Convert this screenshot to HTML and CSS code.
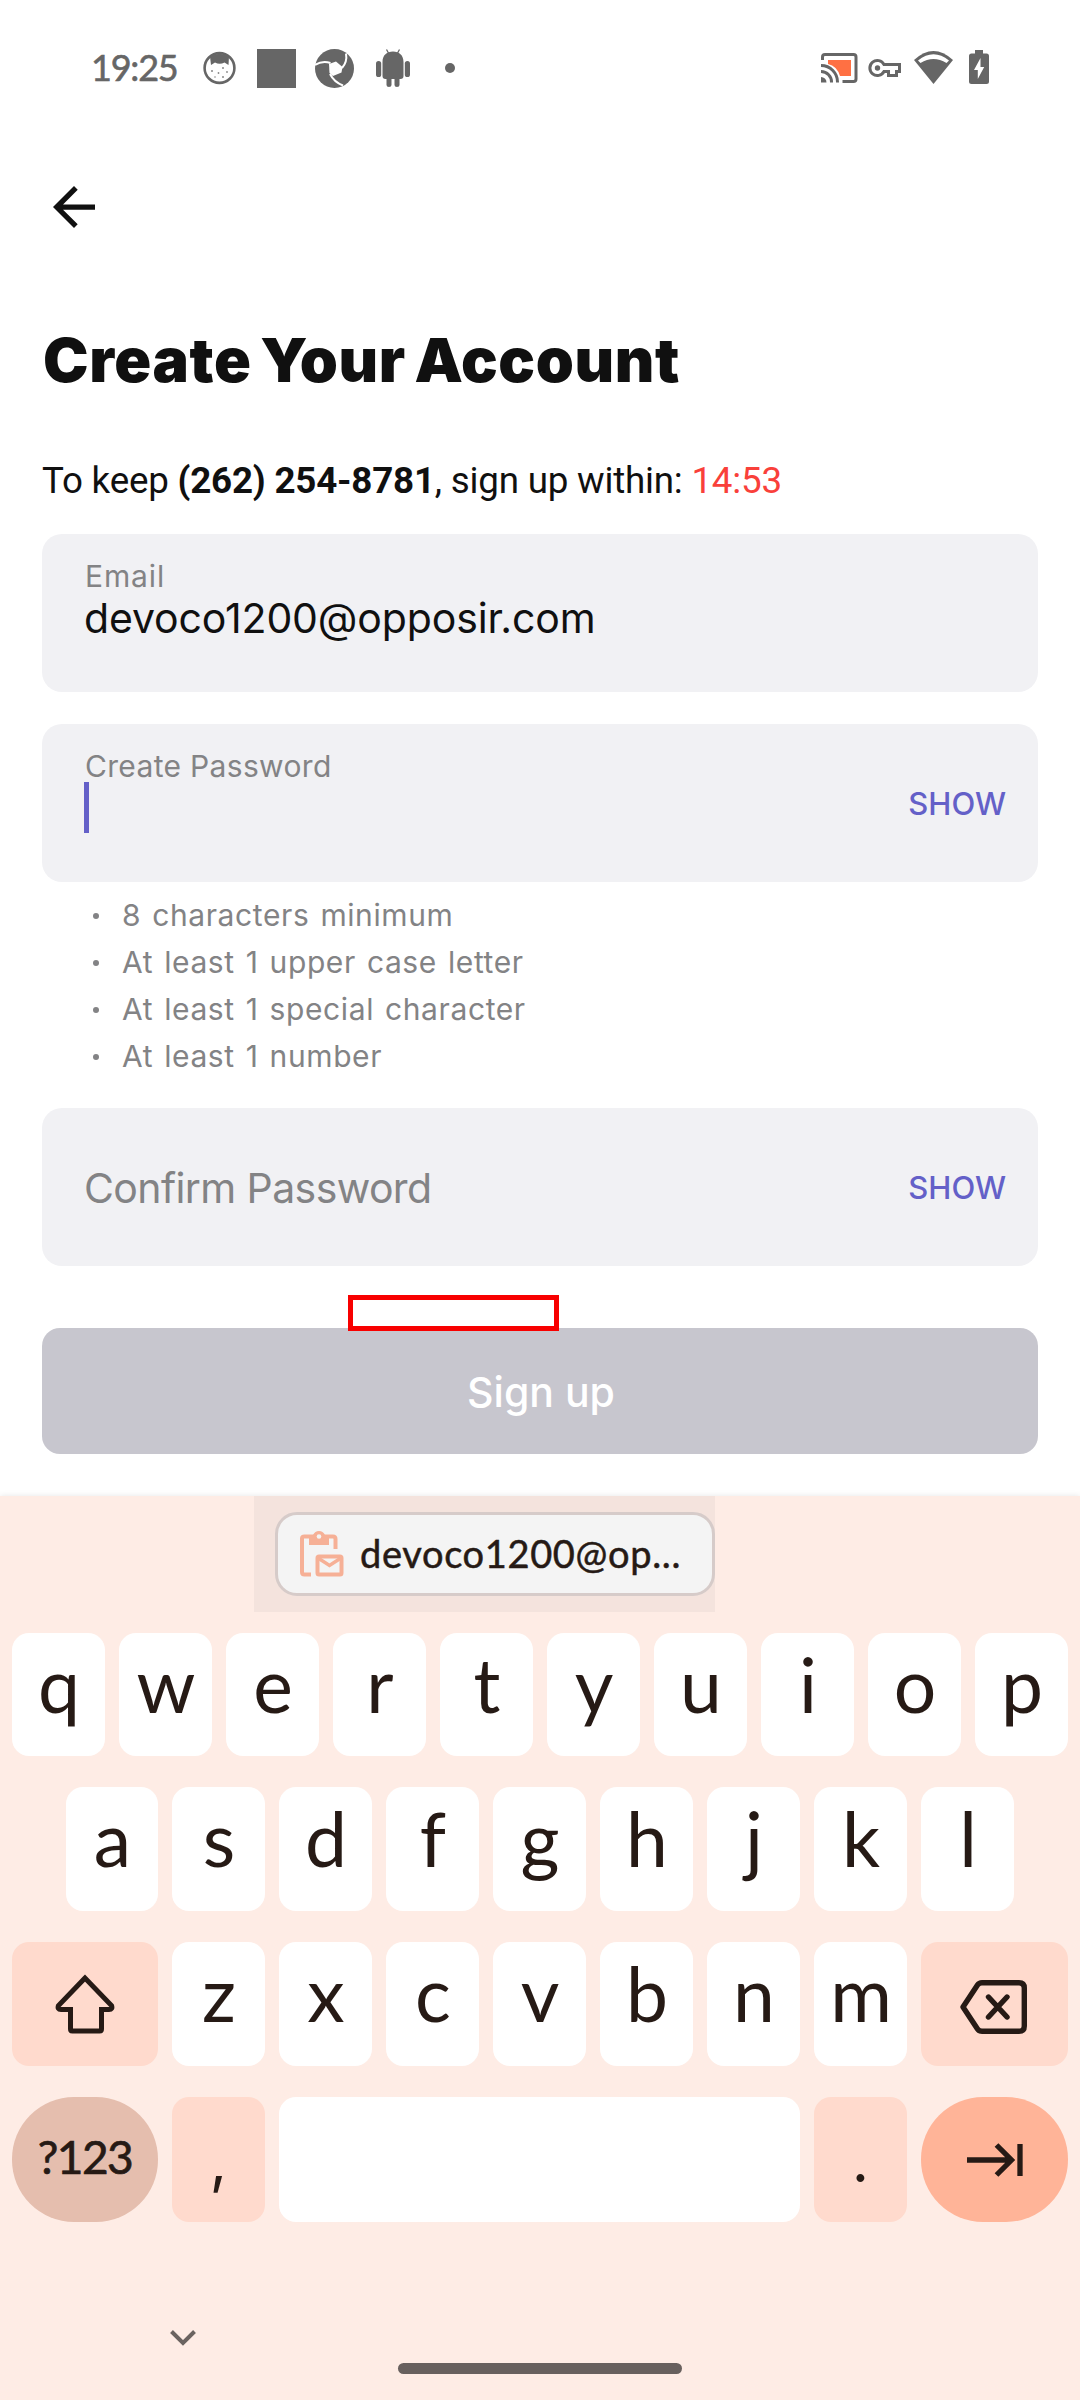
FILE: index.html
```
<!DOCTYPE html>
<html lang="en">
<head>
<meta charset="utf-8">
<title>Create Your Account</title>
<link rel="stylesheet" href="styles.css">
</head>
<body>
<div class="screen">
  <header class="status">
    <div class="status-left">
      <span class="clock">19:25</span>
      <svg class="ic-cat" width="33" height="34" viewBox="0 0 33 34"><circle cx="16.5" cy="17" r="14.9" fill="#fff" stroke="#666" stroke-width="2.6"/><path d="M7 5.5Q16.500 0 26 5.500L25.500 14 21.500 11.500Q16.500 14 12 11.500L8 14Z" fill="#666"/><g fill="#888"><circle cx="9" cy="20" r="1"/><circle cx="15.500" cy="22" r=".9"/><circle cx="20" cy="17" r="1"/><circle cx="24" cy="21" r=".9"/><circle cx="12" cy="26" r=".8"/><circle cx="20" cy="26" r="1"/></g></svg>
      <span class="ic-square"></span>
      <svg class="ic-wheel" width="39" height="39" viewBox="0 0 39 39"><circle cx="19.500" cy="19.500" r="19.500" fill="#666"/><path d="M14 15 21 12.500 27.500 18 26.500 23.500 18 27 14.500 24Z" fill="#fff"/><g fill="none" stroke="#fff" stroke-width="2"><path d="M0 16Q7 11.500 15.500 14"/><path d="M31 4.500Q32.500 13 27 19"/><path d="M15 25Q19 33 28 36.500"/></g></svg>
      <svg class="ic-droid" width="34" height="38" viewBox="0 0 34 38" fill="#666"><path d="M6.500 13C6.500 6 11 2.500 17 2.500S27.500 6 27.500 13V27Q27.500 30 24.500 30H23.500V36Q23.500 38 21 38T18.500 36V30H15.500V36Q15.500 38 13 38T10.500 36V30H9.500Q6.500 30 6.500 27Z"/><rect x="0" y="12" width="5.200" height="16" rx="2.600"/><rect x="28.800" y="12" width="5.200" height="16" rx="2.600"/><path d="M10.500.500 13 5M23.500.500 21 5" stroke="#666" stroke-width="1.300"/></svg>
      <span class="ic-dot"></span>
    </div>
    <div class="status-right">
      <svg class="ic-cast" width="37" height="30" viewBox="0 0 37 30"><path d="M7 7H30V23H19Q16 13 7 11Z" fill="#ff7043"/><g fill="none" stroke="#666" stroke-width="3"><path d="M1.500 7V4Q1.500 1.500 4 1.500H32.500Q35 1.500 35 4V26Q35 28.500 32.500 28.500H21.500"/><path d="M0 12.500A16.500 16.500 0 0 1 16.500 29.500M0 18.500A10.500 10.500 0 0 1 10.500 29.500"/></g><path d="M0 24A5.500 5.500 0 0 1 5.500 29.500H0Z" fill="#666"/></svg>
      <svg class="ic-key" width="33" height="20" viewBox="0 0 33 20"><path d="M16 6.500A7.500 7.500 0 1 0 16 13.500H20.500V17.500H28.500V13.500H31.500V6.500Z" fill="none" stroke="#666" stroke-width="3"/><circle cx="9.500" cy="10" r="2.700" fill="#666"/></svg>
      <svg class="ic-wifi" width="39" height="33" viewBox="0 0 39 33"><path d="M19.500 33 0 9Q19.500-9 39 9Z" fill="#666"/><path d="M4 9.500Q19.500-3 35 9.500L32.500 12Q19.500 4 6.500 12Z" fill="#fff"/></svg>
      <svg class="ic-batt" width="20" height="34" viewBox="0 0 20 34"><path d="M6 0H14V3.500H17.500Q20 3.500 20 6V31.500Q20 34 17.500 34H2.500Q0 34 0 31.500V6Q0 3.500 2.500 3.500H6Z" fill="#666"/><path d="M11.500 8 5 20H8.800V29L15.200 17H11.500Z" fill="#fff"/></svg>
    </div>
  </header>

  <main class="form">
    <svg class="back" width="42" height="42" viewBox="4 4 16 16"><path d="M20 11H7.830l5.590-5.590L12 4l-8 8 8 8 1.410-1.410L7.830 13H20v-2z" fill="#101010"/></svg>
    <h1 class="title">Create Your Account</h1>
    <p class="notice">To keep <b>(262) 254-8781</b>, sign up within: <span class="timer">14:53</span></p>

    <div class="field">
      <div class="field-main">
        <div class="label">Email</div>
        <div class="value">devoco1200@opposir.com</div>
      </div>
    </div>

    <div class="field">
      <div class="field-main">
        <div class="label label-create">Create Password</div>
        <div class="caret"></div>
      </div>
      <span class="show">SHOW</span>
    </div>

    <ul class="rules">
      <li>8 characters minimum</li>
      <li>At least 1 upper case letter</li>
      <li>At least 1 special character</li>
      <li>At least 1 number</li>
    </ul>

    <div class="field field-empty">
      <span class="placeholder">Confirm Password</span>
      <span class="show">SHOW</span>
    </div>

    <div class="submit">Sign up<span class="marker"></span></div>
  </main>

  <section class="keyboard">
    <div class="suggest">
      <div class="suggest-panel">
        <div class="chip">
          <svg class="ic-clip" width="44" height="46" viewBox="0 0 44 46"><g fill="none" stroke="#f6b096" stroke-width="4"><path d="M11 43.500H4.500Q2 43.500 2 41V7.500Q2 5.500 4.500 5.500H33Q35.500 5.500 35.500 8V18"/><rect x="17.500" y="25.500" width="24" height="18" rx="1.500"/><path d="M18 27 29.500 34.500 41 27" stroke-width="3.500"/></g><path d="M9 4H13Q15 0 19 0T25 4H29V14H9Z" fill="#f6b096"/><circle cx="19" cy="5.500" r="2.300" fill="#f4f4f4"/></svg>
          <span class="chip-text">devoco1200@op...</span>
        </div>
      </div>
    </div>
    <div class="row row-1"><span class="key">q</span><span class="key">w</span><span class="key">e</span><span class="key">r</span><span class="key">t</span><span class="key">y</span><span class="key">u</span><span class="key">i</span><span class="key">o</span><span class="key">p</span></div>
    <div class="row row-2"><span class="key first">a</span><span class="key">s</span><span class="key">d</span><span class="key">f</span><span class="key">g</span><span class="key">h</span><span class="key">j</span><span class="key">k</span><span class="key">l</span></div>
    <div class="row row-3">
      <span class="key wide fn"><svg width="60" height="60" viewBox="0 0 60 60"><path d="M30 4 3.500 31.500Q2 35.500 6 35.500H15.500V55Q15.500 57 17.500 57H44.500Q46.500 57 46.500 55V35.500H54Q58 35.500 56.500 31.500Z" fill="none" stroke="#261a15" stroke-width="5"/></svg></span>
      <span class="key">z</span><span class="key">x</span><span class="key">c</span><span class="key">v</span><span class="key">b</span><span class="key">n</span><span class="key">m</span>
      <span class="key wide fn erase"><svg width="67" height="54" viewBox="0 0 67 54"><g fill="none" stroke="#261a15" stroke-width="5.400"><path d="M22 2.700H59Q64.300 2.700 64.300 8V46Q64.300 51.300 59 51.300H22Q19 51.300 17.500 49L3 27 17.500 5Q19 2.700 22 2.700Z" stroke-linejoin="round"/><path d="M28.500 17 47 37M47 17 28.500 37" stroke-linecap="round"/></g></svg></span>
    </div>
    <div class="row row-4">
      <span class="key wide pill sym">?123</span>
      <span class="key fn punct">,</span>
      <span class="key space"></span>
      <span class="key fn punct">.</span>
      <span class="key wide pill next"><svg width="56" height="34" viewBox="0 0 56 34"><path d="M0 17H44M29.500 2 44.500 17 29.500 32M53 1V33" fill="none" stroke="#261a15" stroke-width="5.300"/></svg></span>
    </div>
    <div class="nav">
      <svg class="chev" width="26" height="16" viewBox="0 0 26 16"><path d="M1.500 1.500 13 13 24.500 1.500" fill="none" stroke="#6b6360" stroke-width="4"/></svg>
      <span class="home"></span>
    </div>
  </section>
</div>
</body>
</html>
```
FILE: styles.css
```
* { box-sizing: border-box; }
body { margin: 0; background: #fff; }
svg { display: block; flex: none; }
.screen { width: 1080px; height: 2400px; display: flex; flex-direction: column; font-family: Inter, "Liberation Sans", sans-serif; color: #101010; overflow: hidden; }

/* status bar */
.status { height: 136px; padding: 0 91px 0 91px; display: flex; justify-content: space-between; align-items: center; }
.status-left, .status-right { display: flex; align-items: center; }
.clock { font: 36px/40px Lato, sans-serif; letter-spacing: -1.2px; -webkit-text-stroke: .6px #666; color: #666; width: 112px; margin-top: -2px; }
.ic-cat { margin-top: -1px; }
.ic-square { width: 39px; height: 39px; background: #666; margin: 0 19px 0 21px; }
.ic-droid { margin-left: 22px; }
.ic-dot { width: 10px; height: 10px; border-radius: 50%; background: #666; margin-left: 35px; }
.ic-key { margin-left: 10px; }
.ic-wifi { margin: -2px 16px 0 13px; }
.ic-batt { margin-top: -2px; }

/* form */
.form { height: 1360px; padding: 50px 42px 0; }
.back { margin-left: 11px; }
.title { margin: 96px 0 0 1px; font-size: 61px; line-height: 72px; font-weight: 900; letter-spacing: .6px; word-spacing: -4px; white-space: nowrap; }
.notice { margin: 62px 0 32px; padding-top: 1px; height: 44px; font: 36.75px/44px Roboto, sans-serif; letter-spacing: -.21px; white-space: nowrap; }
.timer { color: #f9403a; }
.field { height: 158px; border-radius: 20px; background: #f1f1f4; padding: 26px 32px 0 42px; margin-bottom: 32px; display: flex; justify-content: space-between; }
.label { margin-left: 1px; font-size: 30px; line-height: 33px; letter-spacing: .9px; color: #838385; white-space: nowrap; }
.label-create { letter-spacing: .33px; }
.value { font-size: 41px; line-height: 51px; letter-spacing: -.12px; white-space: nowrap; }
.caret { width: 5px; height: 51px; margin-top: -1px; background: #6460c8; }
.show { align-self: center; margin-top: -25px; font-size: 31px; line-height: 38px; font-weight: 500; color: #6460c8; }
.rules { list-style: none; margin: -22px 0 28px 51px; padding: 0; font-size: 30px; line-height: 47px; letter-spacing: .6px; word-spacing: 2px; color: #838385; }
.rules li { display: flex; align-items: center; gap: 23px; white-space: nowrap; }
.rules li::before { content: ""; width: 6px; height: 6px; border-radius: 50%; background: #838385; }
.field-empty { padding-top: 2px; align-items: center; margin-bottom: 62px; }
.field-empty .show { margin-top: 0; }
.placeholder { font-size: 41px; line-height: 50px; letter-spacing: -.6px; color: #838385; }
.submit { position: relative; height: 126px; padding: 2px 0 0 2px; border-radius: 18px; background: #c7c6ce; color: #fff; font-size: 41px; font-weight: 500; display: flex; align-items: center; justify-content: center; }
.marker { position: absolute; left: 306px; top: -33px; width: 211px; height: 36px; border: 5px solid #f80000; }

/* keyboard */
.keyboard { height: 904px; background: #feece5; box-shadow: 0 0 6px rgba(0, 0, 0, .1); color: #261a15; font-family: Lato, sans-serif; }
.suggest { height: 137px; padding-left: 254px; }
.suggest-panel { width: 461px; height: 116px; padding: 16px 0 0 21px; background: #f4e3dd; }
.chip { width: 440px; height: 84px; border: 3px solid #d6cbc9; border-radius: 22px; background: #f4f4f4; padding-left: 22px; display: flex; align-items: center; gap: 16px; }
.chip-text { margin-top: -2px; font-size: 38px; line-height: 46px; letter-spacing: .65px; -webkit-text-stroke: .5px #261a15; white-space: nowrap; }
.row { display: flex; gap: 14px; padding: 0 12px; }
.row-1 { height: 123px; margin-bottom: 31px; }
.row-2 { height: 124px; margin-bottom: 31px; padding-left: 66px; }
.row-3 { height: 124px; margin-bottom: 31px; }
.row-4 { height: 125px; }
.key { width: 93px; flex: none; border-radius: 17px; background: #fff; display: flex; align-items: center; justify-content: center; font-size: 75px; line-height: 90px; padding: 0 0 22px 1px; }
.first { width: 92px; }
.wide { width: 146px; padding: 0; }
.fn { background: #ffdacd; }
.erase { width: 147px; padding: 5px 2px 0 0; }
.pill { border-radius: 62px; }
.sym { background: #e5beae; font-size: 46px; letter-spacing: -1.5px; -webkit-text-stroke: .7px #261a15; padding-bottom: 6px; }
.punct { font-family: Inter, sans-serif; font-size: 60px; padding: 0; }
.space { flex: 1; }
.next { width: 147px; background: #ffb498; }
.nav { height: 178px; padding: 108px 0 0 170px; }
.home { display: block; width: 284px; height: 11px; margin: 17px 0 0 228px; border-radius: 6px; background: #68605e; }
```
